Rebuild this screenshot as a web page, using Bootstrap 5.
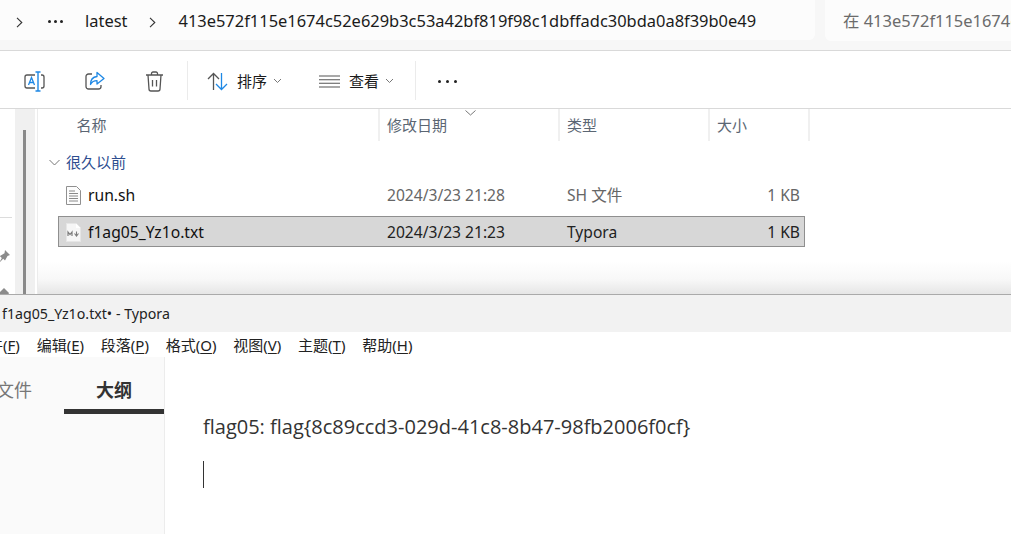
<!DOCTYPE html>
<html lang="zh">
<head>
<meta charset="utf-8">
<title>Typora</title>
<link href="https://cdn.jsdelivr.net/npm/bootstrap@5.3.0/dist/css/bootstrap.min.css" rel="stylesheet">
<style>
html,body{margin:0;height:100%;overflow:hidden;background:#fff}
body{font-family:"Noto Sans","Noto Sans CJK SC",sans-serif;font-size:15px;color:#1b1b1b}
.shot{width:1011px;height:534px;overflow:hidden}
.addr{height:51px;background:#f7f7f7;border-bottom:1px solid #d9d9d9;gap:10px}
.crumbs{width:815px;height:40px;background:#fcfcfc;border-radius:0 0 6px 0;white-space:nowrap;overflow:hidden;padding-left:16px;font-size:16.45px;line-height:41px}
.searchbox{flex:1;height:41px;background:#fcfcfc;border-radius:0 0 0 6px;padding-left:18px;line-height:42px;font-size:16.45px;color:#6b6b6b;white-space:nowrap;overflow:hidden}
.seg-a{margin-left:25px}.seg-b{margin-left:22px}.seg-c{margin-left:22px}.seg-d{margin-left:22px}
.dots{display:inline-flex;gap:3px;vertical-align:middle;position:relative;top:-1px}
.dots i{width:3px;height:3px;border-radius:50%;background:#222;display:block}
.dots.wide{gap:5px;margin-left:22px;top:0}
.tools{height:58px;border-bottom:1px solid #d9d9d9;padding:3px 0 0 24px}
.tool-sep{width:1px;height:39px;background:#ebebeb;margin-top:-1px}
.tool-txt{font-size:15px;line-height:20px;color:#1b1b1b;margin-left:9px}
.gap-40{margin-left:40px}.gap-23{margin-left:23px}.gap-19{margin-left:19px}.gap-37{margin-left:37px}.gap-21{margin-left:21px}.gap-6{margin-left:6px}
.explorer{height:185px}
.rail{width:15px;background:#fff;overflow:hidden;flex:none}
.rail-line{height:1px;background:#dcdcdc;width:12px;margin-top:108px}
.rail-pin{display:block;margin-left:-4px}
.pin-a{margin-top:31px}.pin-b{margin-top:22px;margin-left:-2px}
.gutter{width:20px;background:#f0f0f0;padding:21px 8px 0 8px;flex:none}
.thumb{width:3px;height:100%;background:#8a8a8a}
.paneline{width:3px;border-right:1px solid #ececec;flex:none}
.pane{flex:1;position:relative;min-width:0;background:linear-gradient(#fff 0,#fff 152px,#f8f8f8 170px,#e6e6e6 185px)}
.head{display:grid;grid-template-columns:342px 180px 150px 100px;height:32px;font-size:15px;color:#5b6673;line-height:32px}
.head div{border-right:2px solid #f0f0f0;padding-left:7px}
.head div:first-child{padding-left:38.5px}
.sorter{position:absolute;left:427px;top:1px}
.groupline{height:28px;margin-top:7px;padding-left:11px;gap:6px;color:#2d4d8f;font-size:15px;line-height:28px}
.file{display:grid;grid-template-columns:328px 180px 150px 87px;height:31px;margin-left:20px;width:747px;line-height:29px;align-items:center;border:1px solid transparent}
.file.first{margin-top:3px}
.file+.file{margin-top:6px}
.file .nm{display:flex;align-items:center;padding-left:7px;gap:7px;font-size:15.7px;color:#111}
.file .nm span,.file .meta,.file .sz{padding-top:1px}
.file .meta{color:#666;font-size:15.6px}
.file .sz{text-align:right;color:#666;font-size:15.6px;padding-right:4px}
.file.picked{background:#d7d7d7;border-color:#8f8f8f}
.file.picked .meta,.file.picked .sz{color:#222}
.winline{height:1px;background:#aaa}
.ty-title{height:37px;background:#f2f2f2;padding-left:2px;line-height:38px;font-size:14.2px;color:#222;white-space:nowrap}
.ty-menu{height:25px;gap:16.8px;margin-left:-27px;font-size:15px;line-height:26px;color:#222;white-space:nowrap}
.ty-menu u{text-underline-offset:2px}
.ty-body{height:177px}
.ty-side{width:165px;background:#fafafa;border-right:1px solid #ececec;overflow:hidden;flex:none}
.ty-tabs{display:flex;margin-left:-36px;width:200px}
.ty-tab{width:100px;height:57px;text-align:center;font-size:18px;line-height:66px;color:#777}
.ty-tab.on{color:#333;font-weight:700;border-bottom:5px solid #333}
.ty-main{padding:56px 0 0 38px;font-family:"Open Sans","Noto Sans CJK SC",sans-serif;font-size:20px;color:#333;line-height:28px}
.caret-bar{width:1px;height:27px;background:#333;margin-top:20px}
</style>
</head>
<body>
<div class="shot d-flex flex-column">
  <div class="addr d-flex">
    <div class="crumbs">
      <svg width="7" height="11" viewBox="0 0 7 11"><path d="M1 .8 5.800 5.500 1 10.200" fill="none" stroke="#333" stroke-width="1.100"/></svg><span class="dots seg-a"><i></i><i></i><i></i></span><span class="seg-b">latest</span><svg class="seg-c" width="7" height="11" viewBox="0 0 7 11"><path d="M1 .8 5.800 5.500 1 10.200" fill="none" stroke="#333" stroke-width="1.100"/></svg><span class="seg-d">413e572f115e1674c52e629b3c53a42bf819f98c1dbffadc30bda0a8f39b0e49</span>
    </div>
    <div class="searchbox">在 413e572f115e1674c52e629b3c53a42bf819f98c1dbffadc30bda0a8f39b0e49 中搜索</div>
  </div>

  <div class="tools d-flex align-items-center">
    <svg width="21" height="21" viewBox="0 0 21 21" fill="none"><path d="M11 4H3a2 2 0 0 0-2 2v9a2 2 0 0 0 2 2h8M17 4h1a2 2 0 0 1 2 2v9a2 2 0 0 1-2 2h-1" stroke="#555" stroke-width="1.300"/><path d="M14 1v19M11.500 1h5M11.500 20h5" stroke="#1e88e5" stroke-width="1.400"/><path d="M4.500 14 7.500 6.500l3 7.500M5.500 11.500h4" stroke="#1e88e5" stroke-width="1.300"/></svg>
    <svg class="gap-40" width="20" height="20" viewBox="0 0 20 20" fill="none"><path d="M7 3H3.500A2.500 2.500 0 0 0 1 5.500v10A2.500 2.500 0 0 0 3.500 18h10a2.500 2.500 0 0 0 2.500-2.500V14" stroke="#555" stroke-width="1.300"/><path d="M12 1.500 19 7.500 12 13v-3.300c-3 0-5 1-6.500 3.800 0-4.500 2.500-7.500 6.500-8z" stroke="#1e88e5" stroke-width="1.300" stroke-linejoin="round"/></svg>
    <svg class="gap-40" width="19" height="21" viewBox="0 0 19 21" fill="none" stroke="#555" stroke-width="1.300"><path d="M1 4h17M6.500 4V2.500A1.500 1.500 0 0 1 8 1h3a1.500 1.500 0 0 1 1.500 1.500V4M3 4l1 14a2 2 0 0 0 2 2h7a2 2 0 0 0 2-2l1-14M7.500 9v6.500M11.500 9v6.500"/></svg>
    <div class="tool-sep gap-23"></div>
    <svg class="gap-19" width="21" height="19" viewBox="0 0 21 19" fill="none" stroke-width="1.300"><path d="M6.500 18V1.500M1 7l5.500-5.500L12 7" stroke="#555"/><path d="M14.500 1v16.500M9 12l5.500 5.500L20 12" stroke="#1e88e5"/></svg>
    <span class="tool-txt">排序</span>
    <svg class="gap-6" width="9" height="6" viewBox="0 0 9 6"><path d="M1 1l3.500 3.500L8 1" fill="none" stroke="#777"/></svg>
    <svg class="gap-37" width="21" height="13" viewBox="0 0 21 13"><path d="M0 1h21M0 4.700h21M0 8.300h21M0 12h21" stroke="#555" stroke-width="1.100"/></svg>
    <span class="tool-txt">查看</span>
    <svg class="gap-6" width="9" height="6" viewBox="0 0 9 6"><path d="M1 1l3.500 3.500L8 1" fill="none" stroke="#777"/></svg>
    <div class="tool-sep gap-21"></div>
    <span class="dots wide"><i></i><i></i><i></i></span>
  </div>

  <div class="explorer d-flex">
    <div class="rail">
      <div class="rail-line"></div>
      <svg class="rail-pin pin-a" width="15" height="16" viewBox="0 0 15 16"><path d="M9 1l5 5-2.500 1-2.500 4.500-1.800-1.800L3 14l2.800-5-2-2L8.500 4.200z" fill="#8b8b8b"/></svg>
      <svg class="rail-pin pin-b" width="12" height="10" viewBox="0 0 12 10"><path d="M6 1l5 5-2 4H3L1 6z" fill="#8b8b8b"/></svg>
    </div>
    <div class="gutter"><div class="thumb"></div></div>
    <div class="paneline"></div>
    <div class="pane">
      <svg class="sorter" width="11" height="6" viewBox="0 0 11 6"><path d="M.5.500l5 4.500 5-4.500" fill="none" stroke="#777"/></svg>
      <div class="head"><div>名称</div><div>修改日期</div><div>类型</div><div>大小</div></div>
      <div class="groupline d-flex align-items-center">
        <svg width="11" height="7" viewBox="0 0 11 7"><path d="M.5 1l5 5 5-5" fill="none" stroke="#777"/></svg>
        <span>很久以前</span>
      </div>
      <div class="file first">
        <div class="nm">
          <svg width="15" height="19" viewBox="0 0 15 19" fill="none"><path d="M.5.500h10l4 4v14H.500z" fill="#fdfdfd" stroke="#909090"/><path d="M3 5h6M3 7.500h9M3 10h9M3 12.500h9M3 15h9" stroke="#8a8a8a"/></svg>
          <span>run.sh</span>
        </div>
        <div class="meta">2024/3/23 21:28</div>
        <div class="meta">SH 文件</div>
        <div class="sz">1 KB</div>
      </div>
      <div class="file picked">
        <div class="nm">
          <svg width="15" height="19" viewBox="0 0 15 19"><path d="M.5.500h9.500l4.500 4.500v13.500H.500z" fill="#f6f6f6" stroke="#e6e6e6"/><path d="M10 .5V5h4.500z" fill="#fff"/><path d="M2 13V9l2 2.500L6 9v4" fill="none" stroke="#7c7c7c" stroke-width="1.200"/><path d="M10.500 8.500v4M8.500 10.500l2 2.500 2-2.500" fill="none" stroke="#7c7c7c" stroke-width="1.100"/></svg>
          <span>f1ag05_Yz1o.txt</span>
        </div>
        <div class="meta">2024/3/23 21:23</div>
        <div class="meta">Typora</div>
        <div class="sz">1 KB</div>
      </div>
    </div>
  </div>

  <div class="winline"></div>
  <div class="ty-title">f1ag05_Yz1o.txt• - Typora</div>
  <div class="ty-menu d-flex">
    <span>文件(<u>F</u>)</span><span>编辑(<u>E</u>)</span><span>段落(<u>P</u>)</span><span>格式(<u>O</u>)</span><span>视图(<u>V</u>)</span><span>主题(<u>T</u>)</span><span>帮助(<u>H</u>)</span>
  </div>
  <div class="ty-body d-flex">
    <div class="ty-side">
      <div class="ty-tabs"><div class="ty-tab">文件</div><div class="ty-tab on">大纲</div></div>
    </div>
    <div class="ty-main">
      <div>flag05: flag{8c89ccd3-029d-41c8-8b47-98fb2006f0cf}</div>
      <div class="caret-bar"></div>
    </div>
  </div>
</div>
<script src="https://cdn.jsdelivr.net/npm/bootstrap@5.3.0/dist/js/bootstrap.bundle.min.js"></script>
</body>
</html>
